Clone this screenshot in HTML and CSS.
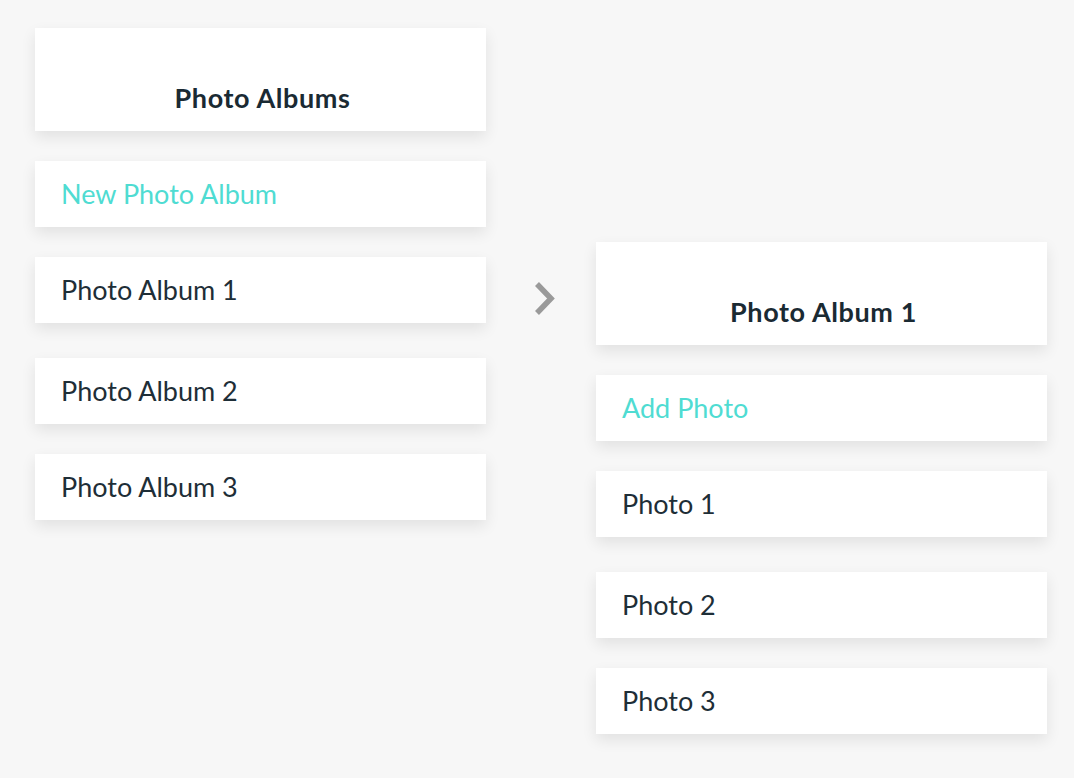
FILE: index.html
```html
<!DOCTYPE html>
<html>
<head>
<meta charset="utf-8">
<link rel="stylesheet" href="styles.css">
</head>
<body>
<div class="board">
  <div class="column">
    <div class="card header"><span>Photo Albums</span></div>
    <div class="card item action">New Photo Album</div>
    <div class="card item">Photo Album 1</div>
    <div class="card item wide-gap">Photo Album 2</div>
    <div class="card item">Photo Album 3</div>
  </div>
  <div class="arrow">
    <svg width="24" height="36" viewBox="0 0 24 36"><path d="M4 3 L18 17.5 L4 32" fill="none" stroke="#9a9a9a" stroke-width="5.5"/></svg>
  </div>
  <div class="column right">
    <div class="card header"><span>Photo Album 1</span></div>
    <div class="card item action">Add Photo</div>
    <div class="card item">Photo 1</div>
    <div class="card item wide-gap">Photo 2</div>
    <div class="card item">Photo 3</div>
  </div>
</div>
</body>
</html>
```
FILE: styles.css
```css
html, body {
  margin: 0;
  padding: 0;
  background: #f7f7f7;
  font-family: "Lato", "Open Sans", sans-serif;
}
.board {
  display: flex;
  padding: 28px 27px 28px 35px;
  align-items: flex-start;
}
.column {
  width: 451px;
  flex-shrink: 0;
  display: flex;
  flex-direction: column;
}
.column.right {
  margin-top: 214px;
}
.arrow {
  width: 110px;
  flex-shrink: 0;
  display: flex;
  justify-content: center;
  padding-top: 253px;
  padding-left: 8px;
  box-sizing: border-box;
}
.arrow svg { display: block; }
.card {
  background: #fff;
  box-shadow: 0 6px 14px rgba(0, 0, 0, 0.09);
  box-sizing: border-box;
  color: #1e2e37;
}
.header {
  height: 103px;
  display: flex;
  align-items: flex-end;
  justify-content: center;
  padding-bottom: 18px;
  padding-left: 4px;
  font-weight: 700;
  font-size: 27px;
  letter-spacing: 0.6px;
  color: #1a2a33;
}
.header span { line-height: 30px; }
.item {
  height: 66px;
  margin-top: 30px;
  padding: 0 26px;
  display: flex;
  align-items: center;
  font-size: 27px;
  padding-bottom: 2px;
}
.item.wide-gap { margin-top: 35px; }
.action { color: #4fdcd2; }
```
